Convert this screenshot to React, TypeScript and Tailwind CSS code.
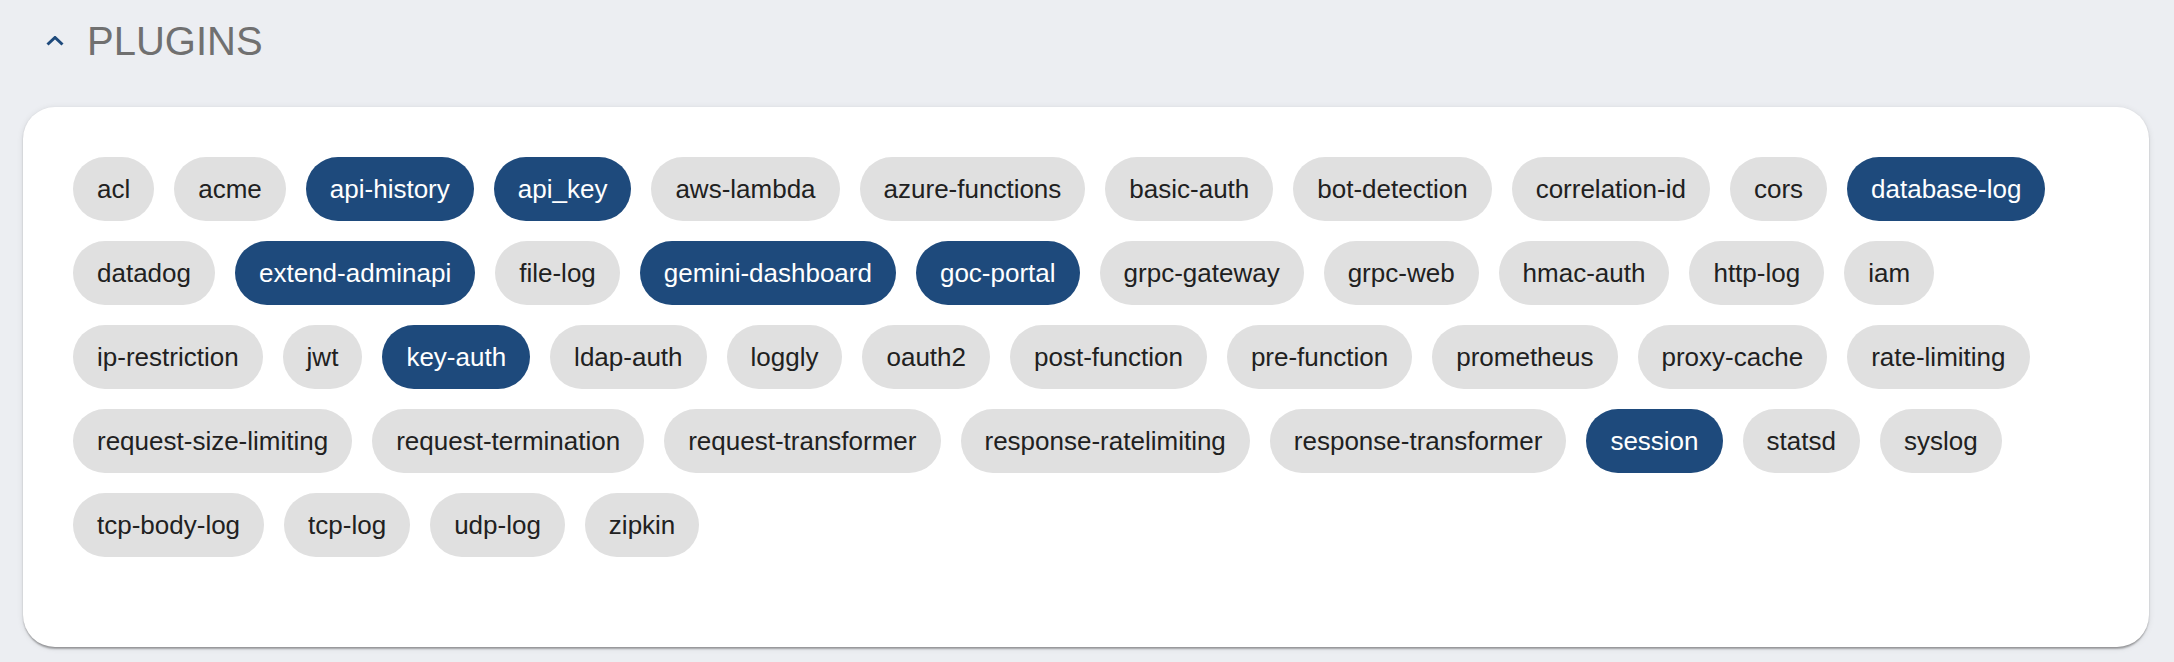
const PLUGINS: { name: string; enabled?: boolean }[] = [
  { name: "acl" },
  { name: "acme" },
  { name: "api-history", enabled: true },
  { name: "api_key", enabled: true },
  { name: "aws-lambda" },
  { name: "azure-functions" },
  { name: "basic-auth" },
  { name: "bot-detection" },
  { name: "correlation-id" },
  { name: "cors" },
  { name: "database-log", enabled: true },
  { name: "datadog" },
  { name: "extend-adminapi", enabled: true },
  { name: "file-log" },
  { name: "gemini-dashboard", enabled: true },
  { name: "goc-portal", enabled: true },
  { name: "grpc-gateway" },
  { name: "grpc-web" },
  { name: "hmac-auth" },
  { name: "http-log" },
  { name: "iam" },
  { name: "ip-restriction" },
  { name: "jwt" },
  { name: "key-auth", enabled: true },
  { name: "ldap-auth" },
  { name: "loggly" },
  { name: "oauth2" },
  { name: "post-function" },
  { name: "pre-function" },
  { name: "prometheus" },
  { name: "proxy-cache" },
  { name: "rate-limiting" },
  { name: "request-size-limiting" },
  { name: "request-termination" },
  { name: "request-transformer" },
  { name: "response-ratelimiting" },
  { name: "response-transformer" },
  { name: "session", enabled: true },
  { name: "statsd" },
  { name: "syslog" },
  { name: "tcp-body-log" },
  { name: "tcp-log" },
  { name: "udp-log" },
  { name: "zipkin" },
];

export default function App() {
  return (
    <div
      className="min-h-screen bg-[#eceef2] pt-[21px]"
      style={{ fontFamily: '"Liberation Sans", Arial, Helvetica, sans-serif' }}
    >
      {/* Section header */}
      <div className="flex h-[40px] items-center pl-[46px]">
        <svg width="18" height="10" viewBox="0 0 18 10" fill="none" className="text-[#1e4a7c]">
          <path d="M1.5 8.5 L9 1.5 L16.5 8.5" stroke="currentColor" strokeWidth="3" />
        </svg>
        <h2 className="ml-[23px] text-[40px] leading-none font-normal text-[#707070]">PLUGINS</h2>
      </div>

      {/* Plugin list */}
      <div className="ml-[23px] mr-[25px] mt-[46px] rounded-[32px] bg-white px-[50px] pt-[50px] pb-[90px] shadow-[0_3px_2px_-1px_rgba(0,0,0,0.25),0_1px_2px_0_rgba(0,0,0,0.14),0_1px_6px_0_rgba(0,0,0,0.1)]">
        <div className="flex flex-wrap gap-[20px]">
          {PLUGINS.map((p) => (
            <span
              key={p.name}
              className={
                p.enabled
                  ? "flex h-[64px] items-center rounded-full bg-[#1e4a7c] px-[24px] text-[26px] text-white"
                  : "flex h-[64px] items-center rounded-full bg-[#e0e0e0] px-[24px] text-[26px] text-[#212121]"
              }
            >
              {p.name}
            </span>
          ))}
        </div>
      </div>
    </div>
  );
}
